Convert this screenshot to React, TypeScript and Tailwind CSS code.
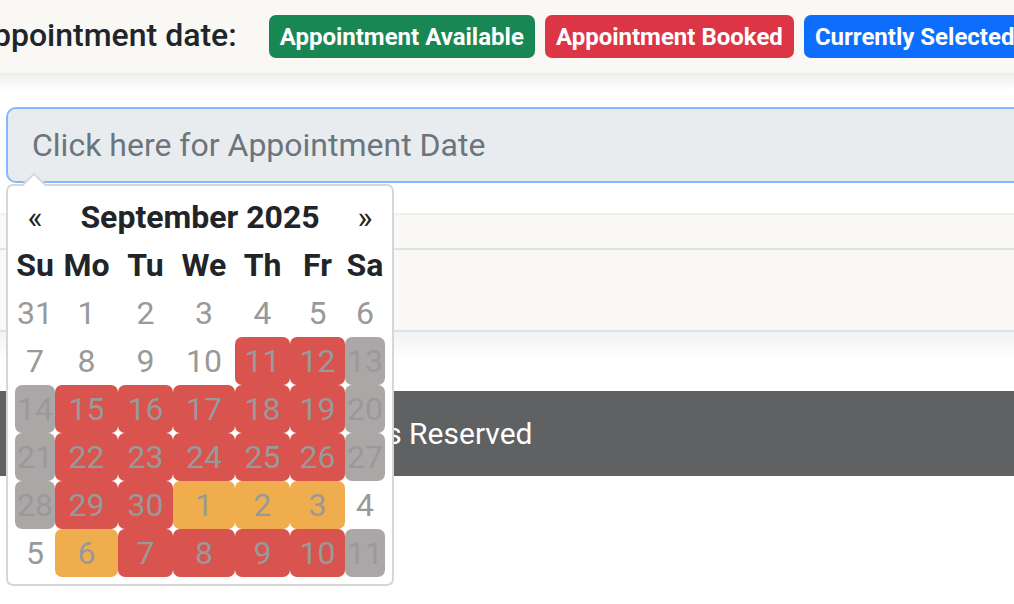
type Kind = 'plain' | 'booked' | 'closed' | 'open';

const COLS = 'grid-cols-[40px_63px_55px_62px_55px_55px_40px]';

const weeks: [number, Kind][][] = [
  [[31, 'plain'], [1, 'plain'], [2, 'plain'], [3, 'plain'], [4, 'plain'], [5, 'plain'], [6, 'plain']],
  [[7, 'plain'], [8, 'plain'], [9, 'plain'], [10, 'plain'], [11, 'booked'], [12, 'booked'], [13, 'closed']],
  [[14, 'closed'], [15, 'booked'], [16, 'booked'], [17, 'booked'], [18, 'booked'], [19, 'booked'], [20, 'closed']],
  [[21, 'closed'], [22, 'booked'], [23, 'booked'], [24, 'booked'], [25, 'booked'], [26, 'booked'], [27, 'closed']],
  [[28, 'closed'], [29, 'booked'], [30, 'booked'], [1, 'open'], [2, 'open'], [3, 'open'], [4, 'plain']],
  [[5, 'plain'], [6, 'open'], [7, 'booked'], [8, 'booked'], [9, 'booked'], [10, 'booked'], [11, 'closed']],
];

const kindClass: Record<Kind, string> = {
  plain: '',
  booked: 'bg-[#d9534f]',
  closed: 'bg-[#aba7a7]',
  open: 'bg-[#f0ad4e]',
};

function Badge({ label, color }: { label: string; color: string }) {
  return (
    <span className={`${color} flex h-[43px] shrink-0 items-center rounded-[7px] px-[11px] text-[24px] font-bold whitespace-nowrap text-white`}>
      {label}
    </span>
  );
}

function DatePicker() {
  return (
    <div className="absolute top-[184px] left-[6px] w-[388px] rounded-[7px] border-2 border-[#d6d6d6] bg-white px-[7px] pt-[7px] pb-[7px]">
      {/* pointer */}
      <div className="absolute -top-[10px] left-[17px] h-[18px] w-[18px] rotate-45 border-t-2 border-l-2 border-[#d6d6d6] bg-white" />
      <div className={`relative grid ${COLS} text-[32px] leading-[48px] text-[#212529]`}>
        <div className="text-center">«</div>
        <div className="col-span-5 text-center font-bold">September 2025</div>
        <div className="text-center">»</div>
        {['Su', 'Mo', 'Tu', 'We', 'Th', 'Fr', 'Sa'].map((d) => (
          <div key={d} className="text-center font-bold">
            {d}
          </div>
        ))}
        {weeks.flat().map(([n, kind], i) => (
          <div key={i} className={`${kindClass[kind]} rounded-[7px] text-center text-[#999999]`}>
            {n}
          </div>
        ))}
      </div>
    </div>
  );
}

export default function App() {
  return (
    <div className="relative h-[604px] w-[1014px] overflow-hidden bg-white font-['Roboto','Liberation_Sans',sans-serif]">
      <div className="flex h-[75px] items-center gap-[10px] border-b-2 border-[#eeeeee] bg-[#f9f8f5]">
        <span className="-ml-[28px] mr-[22px] shrink-0 pb-[3px] text-[32px] font-medium whitespace-nowrap text-[#212529]">Appointment date:</span>
        <Badge label="Appointment Available" color="bg-[#198754]" />
        <Badge label="Appointment Booked" color="bg-[#dc3545]" />
        <Badge label="Currently Selected" color="bg-[#0d6efd]" />
      </div>
      <div className="h-[16px] bg-gradient-to-b from-[#f1f1f1] to-white" />

      <div className="mt-[16px] ml-[6px] flex h-[76px] w-[1100px] items-center rounded-[10px] border-2 border-[#86b7fe] bg-[#e9ecef] pl-[24px] text-[32px] text-[#6c757d]">
        Click here for Appointment Date
      </div>

      <div className="mt-[30px] h-[35px] border-t-2 border-[#efefef] bg-[#f9f8f5]" />
      <div className="h-[84px] border-y-2 border-[#dee2e6] bg-[#f9f8f5]" />
      <div className="h-[28px] bg-gradient-to-b from-[#f1f2f4] to-white" />

      <div className="mt-[31px] flex h-[85px] items-center bg-[#606162] text-[30px] whitespace-nowrap text-white">
        <span className="ml-[54px]">S © 2025 Salon. All Rights Reserved</span>
      </div>

      <DatePicker />
    </div>
  );
}
